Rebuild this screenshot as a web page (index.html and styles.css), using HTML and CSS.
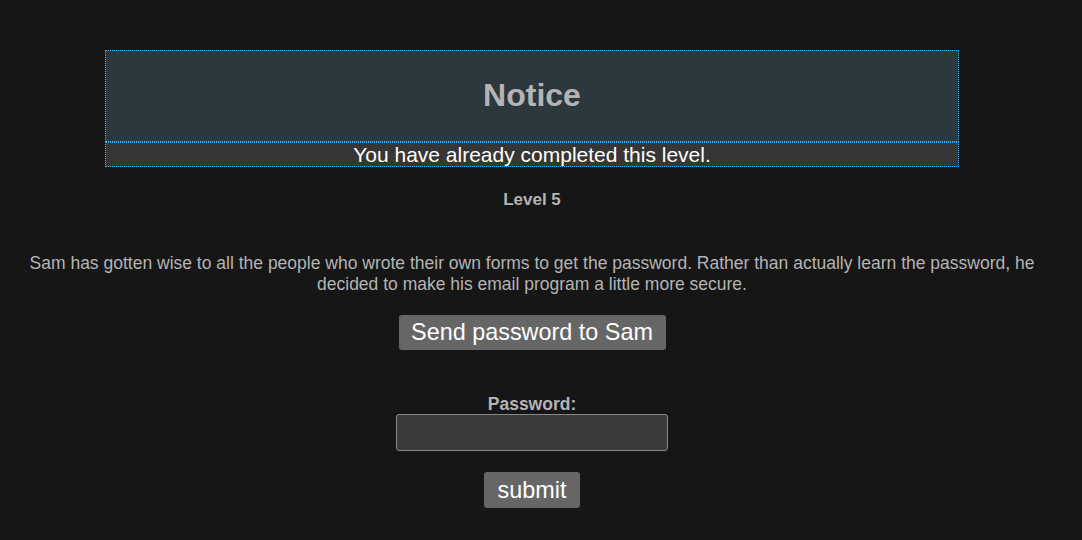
FILE: index.html
```html
<!DOCTYPE html>
<html>
<head>
<meta charset="utf-8">
<link rel="stylesheet" href="styles.css">
</head>
<body>
<div class="page">
  <div class="notice">
    <div class="notice-head">Notice</div>
    <div class="notice-msg">You have already completed this level.</div>
  </div>
  <div class="level">Level 5</div>
  <p class="desc">Sam has gotten wise to all the people who wrote their own forms to get the password. Rather than actually learn the password, he decided to make his email program a little more secure.</p>
  <form class="form">
    <button type="button" class="btn btn-send">Send password to Sam</button>
    <label class="label" for="pw">Password:</label>
    <input class="input" id="pw" type="password">
    <button type="button" class="btn btn-submit">submit</button>
  </form>
</div>
</body>
</html>
```
FILE: styles.css
```css
html, body {
  margin: 0;
  padding: 0;
  background: #161616;
}
body {
  font-family: "Liberation Sans", Arial, sans-serif;
  color: #b4b4b4;
}
.page {
  width: 1064px;
  padding-top: 50px;
  display: flex;
  flex-direction: column;
  align-items: center;
}
.notice {
  width: 854px;
  display: flex;
  flex-direction: column;
}
.notice-head {
  height: 92px;
  box-sizing: border-box;
  background: #2c373e;
  border: 1px dotted #3aaeff;
  display: flex;
  align-items: center;
  justify-content: center;
  padding-bottom: 2px;
  font-size: 32px;
  font-weight: bold;
  color: #b4b4b4;
}
.notice-msg {
  background: #363636;
  border: 1px dotted #3aaeff;
  height: 25px;
  box-sizing: border-box;
  line-height: 23px;
  text-align: center;
  font-size: 21px;
  color: #ffffff;
}
.level {
  margin-top: 23px;
  font-size: 17px;
  font-weight: bold;
  line-height: 20px;
}
.desc {
  margin: 43px 0 0;
  width: 1030px;
  text-align: center;
  font-size: 17.5px;
  line-height: 21px;
}
.form {
  display: flex;
  flex-direction: column;
  align-items: center;
  margin-top: 20px;
}
.btn {
  background: #666666;
  color: #ffffff;
  border: none;
  border-radius: 3px;
  font-family: "Liberation Sans", Arial, sans-serif;
  font-size: 23.4px;
  padding: 0;
}
.btn-send {
  width: 267px;
  height: 35px;
}
.label {
  margin-top: 44px;
  font-size: 17.5px;
  font-weight: bold;
  line-height: 21px;
  color: #b4b4b4;
}
.input {
  box-sizing: border-box;
  width: 272px;
  height: 37px;
  margin-top: -1px;
  background: #3a3a3a;
  border: 1px solid #888888;
  border-radius: 3px;
  color: #fff;
}
.btn-submit {
  margin-top: 21px;
  width: 96px;
  height: 36px;
}
```
